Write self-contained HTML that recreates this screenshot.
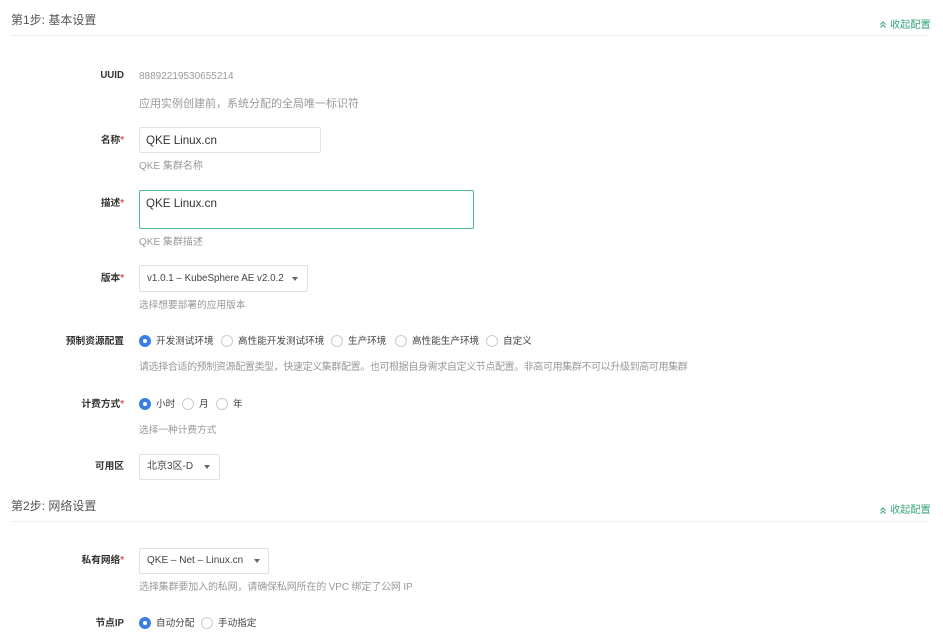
<!DOCTYPE html>
<html><head><meta charset="utf-8"><style>
body{margin:0;width:943px;height:643px;background:#fff;position:relative;overflow:hidden;font-family:"Liberation Sans","Noto Sans CJK SC",sans-serif;}
.a{position:absolute;white-space:nowrap;line-height:14px;margin-top:1px;}
.h{font-size:12px;color:#555;}
.col{font-size:10px;color:#3aa57a;}
.line{position:absolute;left:11px;width:917px;height:1px;background:#eeeeee;}
.lb{font-size:9.7px;font-weight:bold;color:#333;text-align:right;width:124px;left:0;}
.lb i{color:#e05050;font-style:normal;}
.v{font-size:9.7px;color:#999;}
.t{font-size:9.6px;color:#444;}
.box{position:absolute;border:1px solid #e2e2e2;border-radius:2px;box-sizing:border-box;background:#fff;}
.rd{position:absolute;width:12px;height:12px;border:1px solid #ccc;border-radius:50%;box-sizing:border-box;}
.rd.on{background:#3b7fe6;border-color:#3b7fe6;}
.rd.on:after{content:"";position:absolute;left:3px;top:3px;width:4px;height:4px;border-radius:50%;background:#fff;}
.car{position:absolute;width:0;height:0;border-left:3.5px solid transparent;border-right:3.5px solid transparent;border-top:4px solid #666;}
svg{position:absolute;}
</style></head><body>
<div class="a h" style="left:11px;top:12px">第1步: 基本设置</div>
<svg style="left:879px;top:20px" width="8" height="9" viewBox="0 0 8 9"><path d="M1.5 4.5L4 2L6.5 4.5M1.5 7.5L4 5L6.5 7.5" fill="none" stroke="#3aa57a" stroke-width="1.1"/></svg>
<div class="a col" style="left:890px;top:18px;font-size:10.2px">收起配置</div>
<div class="line" style="top:35px"></div>

<div class="a lb" style="top:68px">UUID</div>
<div class="a v" style="left:139px;top:69px;font-size:10px">88892219530655214</div>
<div class="a v" style="left:139px;top:96px;font-size:11px">应用实例创建前，系统分配的全局唯一标识符</div>

<div class="a lb" style="top:133px">名称<i>*</i></div>
<div class="box" style="left:139px;top:127px;width:182px;height:26px"></div>
<div class="a" style="left:146px;top:133px;font-size:11.6px;color:#333">QKE Linux.cn</div>
<div class="a v" style="left:139px;top:159px;font-size:10px">QKE 集群名称</div>

<div class="a lb" style="top:196px">描述<i>*</i></div>
<div class="box" style="left:139px;top:190px;width:335px;height:39px;border-color:#4cb98a"></div>
<div class="a" style="left:146px;top:196px;font-size:11.6px;color:#333">QKE Linux.cn</div>
<div class="a v" style="left:139px;top:235px;font-size:10px">QKE 集群描述</div>

<div class="a lb" style="top:271px">版本<i>*</i></div>
<div class="box" style="left:139px;top:265px;width:169px;height:27px"></div>
<div class="a t" style="left:147px;top:271px;font-size:9.8px">v1.0.1 – KubeSphere AE v2.0.2</div>
<div class="car" style="left:292px;top:277px"></div>
<div class="a v" style="left:139px;top:298px">选择想要部署的应用版本</div>

<div class="a lb" style="top:334px">预制资源配置</div>
<div class="rd on" style="left:139px;top:335px"></div><div class="a t" style="left:156px;top:334px">开发测试环境</div>
<div class="rd" style="left:221px;top:335px"></div><div class="a t" style="left:238px;top:334px">高性能开发测试环境</div>
<div class="rd" style="left:331px;top:335px"></div><div class="a t" style="left:348px;top:334px">生产环境</div>
<div class="rd" style="left:395px;top:335px"></div><div class="a t" style="left:412px;top:334px">高性能生产环境</div>
<div class="rd" style="left:486px;top:335px"></div><div class="a t" style="left:503px;top:334px">自定义</div>
<div class="a v" style="left:139px;top:360px;font-size:10px;letter-spacing:-0.38px">请选择合适的预制资源配置类型，快速定义集群配置。也可根据自身需求自定义节点配置。非高可用集群不可以升级到高可用集群</div>

<div class="a lb" style="top:397px">计费方式<i>*</i></div>
<div class="rd on" style="left:139px;top:398px"></div><div class="a t" style="left:156px;top:397px">小时</div>
<div class="rd" style="left:182px;top:398px"></div><div class="a t" style="left:199px;top:397px">月</div>
<div class="rd" style="left:216px;top:398px"></div><div class="a t" style="left:233px;top:397px">年</div>
<div class="a v" style="left:139px;top:423px">选择一种计费方式</div>

<div class="a lb" style="top:459px">可用区</div>
<div class="box" style="left:139px;top:454px;width:81px;height:26px"></div>
<div class="a t" style="left:147px;top:459px;font-size:10px">北京3区-D</div>
<div class="car" style="left:204px;top:465px"></div>

<div class="a h" style="left:11px;top:498px">第2步: 网络设置</div>
<svg style="left:879px;top:506px" width="8" height="9" viewBox="0 0 8 9"><path d="M1.5 4.5L4 2L6.5 4.5M1.5 7.5L4 5L6.5 7.5" fill="none" stroke="#3aa57a" stroke-width="1.1"/></svg>
<div class="a col" style="left:890px;top:503px;font-size:10.2px">收起配置</div>
<div class="line" style="top:521px"></div>

<div class="a lb" style="top:553px">私有网络<i>*</i></div>
<div class="box" style="left:139px;top:548px;width:130px;height:26px"></div>
<div class="a t" style="left:147px;top:553px;font-size:10px">QKE – Net – Linux.cn</div>
<div class="car" style="left:254px;top:559px"></div>
<div class="a v" style="left:139px;top:580px;font-size:10px;letter-spacing:-0.15px">选择集群要加入的私网，请确保私网所在的 VPC 绑定了公网 IP</div>

<div class="a lb" style="top:616px">节点IP</div>
<div class="rd on" style="left:139px;top:617px"></div><div class="a t" style="left:156px;top:616px">自动分配</div>
<div class="rd" style="left:201px;top:617px"></div><div class="a t" style="left:218px;top:616px">手动指定</div>
</body></html>
